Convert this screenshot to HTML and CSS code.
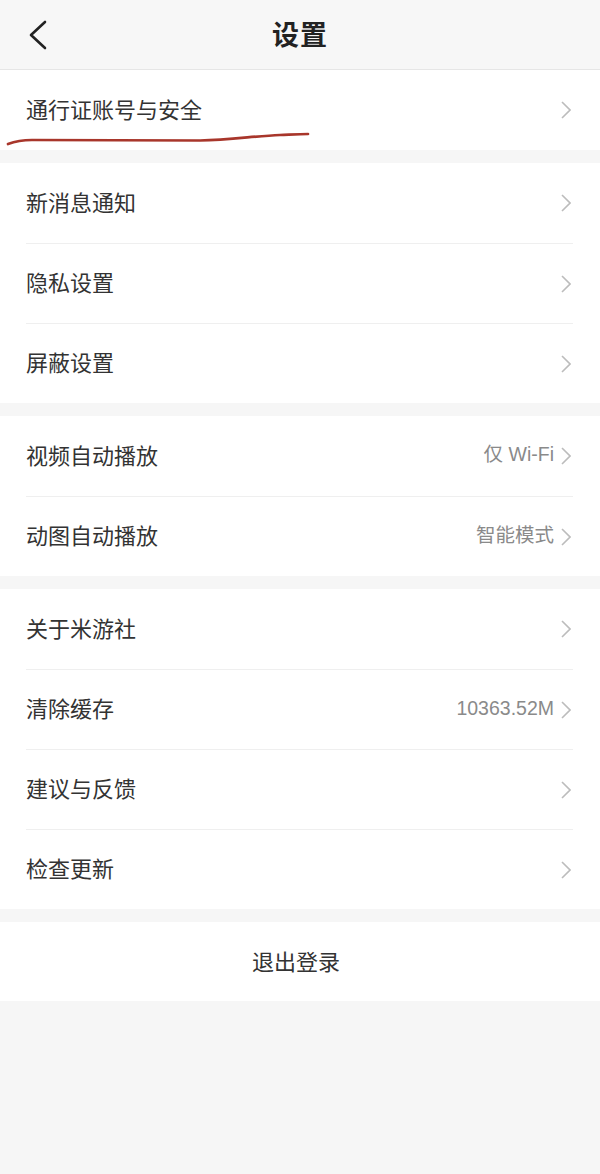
FILE: index.html
```html
<!DOCTYPE html>
<html lang="zh-CN">
<head>
<meta charset="utf-8">
<title>设置</title>
<link rel="stylesheet" href="styles.css">
</head>
<body>
<div class="page">
  <header class="topbar">
    <span class="back">
      <svg width="20" height="30" viewBox="0 0 20 30"><path d="M17 2 L3 15 L17 28" fill="none" stroke="#222" stroke-width="2.6" stroke-linecap="round" stroke-linejoin="round"/></svg>
    </span>
    <h1 class="title">设置</h1>
  </header>

  <section class="group">
    <div class="row"><span class="label">通行证账号与安全</span><span class="right"><svg class="chev" width="10" height="18" viewBox="0 0 10 18"><path d="M1 1 L9 9 L1 17" fill="none" stroke="#bcbcbc" stroke-width="1.6"/></svg></span></div>
  </section>

  <section class="group">
    <div class="row"><span class="label">新消息通知</span><span class="right"><svg class="chev" width="10" height="18" viewBox="0 0 10 18"><path d="M1 1 L9 9 L1 17" fill="none" stroke="#bcbcbc" stroke-width="1.6"/></svg></span></div>
    <div class="row"><span class="label">隐私设置</span><span class="right"><svg class="chev" width="10" height="18" viewBox="0 0 10 18"><path d="M1 1 L9 9 L1 17" fill="none" stroke="#bcbcbc" stroke-width="1.6"/></svg></span></div>
    <div class="row"><span class="label">屏蔽设置</span><span class="right"><svg class="chev" width="10" height="18" viewBox="0 0 10 18"><path d="M1 1 L9 9 L1 17" fill="none" stroke="#bcbcbc" stroke-width="1.6"/></svg></span></div>
  </section>

  <section class="group">
    <div class="row"><span class="label">视频自动播放</span><span class="right"><span class="value">仅 Wi-Fi</span><svg class="chev" width="10" height="18" viewBox="0 0 10 18"><path d="M1 1 L9 9 L1 17" fill="none" stroke="#bcbcbc" stroke-width="1.6"/></svg></span></div>
    <div class="row"><span class="label">动图自动播放</span><span class="right"><span class="value">智能模式</span><svg class="chev" width="10" height="18" viewBox="0 0 10 18"><path d="M1 1 L9 9 L1 17" fill="none" stroke="#bcbcbc" stroke-width="1.6"/></svg></span></div>
  </section>

  <section class="group">
    <div class="row"><span class="label">关于米游社</span><span class="right"><svg class="chev" width="10" height="18" viewBox="0 0 10 18"><path d="M1 1 L9 9 L1 17" fill="none" stroke="#bcbcbc" stroke-width="1.6"/></svg></span></div>
    <div class="row"><span class="label">清除缓存</span><span class="right"><span class="value">10363.52M</span><svg class="chev" width="10" height="18" viewBox="0 0 10 18"><path d="M1 1 L9 9 L1 17" fill="none" stroke="#bcbcbc" stroke-width="1.6"/></svg></span></div>
    <div class="row"><span class="label">建议与反馈</span><span class="right"><svg class="chev" width="10" height="18" viewBox="0 0 10 18"><path d="M1 1 L9 9 L1 17" fill="none" stroke="#bcbcbc" stroke-width="1.6"/></svg></span></div>
    <div class="row"><span class="label">检查更新</span><span class="right"><svg class="chev" width="10" height="18" viewBox="0 0 10 18"><path d="M1 1 L9 9 L1 17" fill="none" stroke="#bcbcbc" stroke-width="1.6"/></svg></span></div>
  </section>

  <section class="group logout"><span class="logout-text">退出登录</span></section>

  <svg class="scribble" width="320" height="30" viewBox="0 0 320 30"><path d="M8 24 C 16 21, 22 20, 32 20 L 200 20.5 C 230 20, 255 16, 280 15 C 292 14.5, 300 14, 308 14" fill="none" stroke="#a8362b" stroke-width="2.7" stroke-linecap="round"/></svg>
</div>
</body>
</html>
```

FILE: styles.css
```css
* { box-sizing: border-box; }
html, body {
  margin: 0;
  padding: 0;
  background: #f6f6f6;
}
body {
  font-family: "Noto Sans CJK SC", "Noto Sans", sans-serif;
  color: #333;
  height: 1174px;
}
.page {
  position: relative;
}
.topbar {
  height: 70px;
  background: #f7f7f7;
  border-bottom: 1px solid #e6e6e6;
  display: flex;
  align-items: center;
  justify-content: center;
  position: relative;
  padding-bottom: 3px;
}
.back {
  position: absolute;
  left: 28px;
  top: 20px;
  width: 20px;
  height: 30px;
  display: block;
}
.back svg { display: block; }
.title {
  margin: 0;
  font-size: 27px;
  font-weight: 700;
  color: #222;
  letter-spacing: 1px;
}
.group {
  background: #fff;
  margin-bottom: 13px;
}
.row {
  margin: 0 27px 0 26px;
  height: 80px;
  display: flex;
  align-items: center;
  justify-content: space-between;
  padding-right: 2px;
}
.row + .row {
  border-top: 1px solid #efefef;
}
.label {
  font-size: 22px;
  line-height: 1;
  color: #333;
  padding-bottom: 5px;
}
.right {
  display: flex;
  align-items: center;
  gap: 7px;
}
.value {
  font-family: "Liberation Sans", "Noto Sans CJK SC", sans-serif;
  font-size: 19.5px;
  line-height: 1;
  color: #8a8a8a;
  padding-bottom: 2px;
}
.chev { display: block; }
.logout {
  height: 79px;
  display: flex;
  align-items: center;
  justify-content: center;
}
.logout-text {
  font-size: 22px;
  line-height: 1;
  color: #333;
  padding-bottom: 4px;
  margin-right: 8px;
}
.scribble {
  position: absolute;
  left: 0;
  top: 120px;
}
```
